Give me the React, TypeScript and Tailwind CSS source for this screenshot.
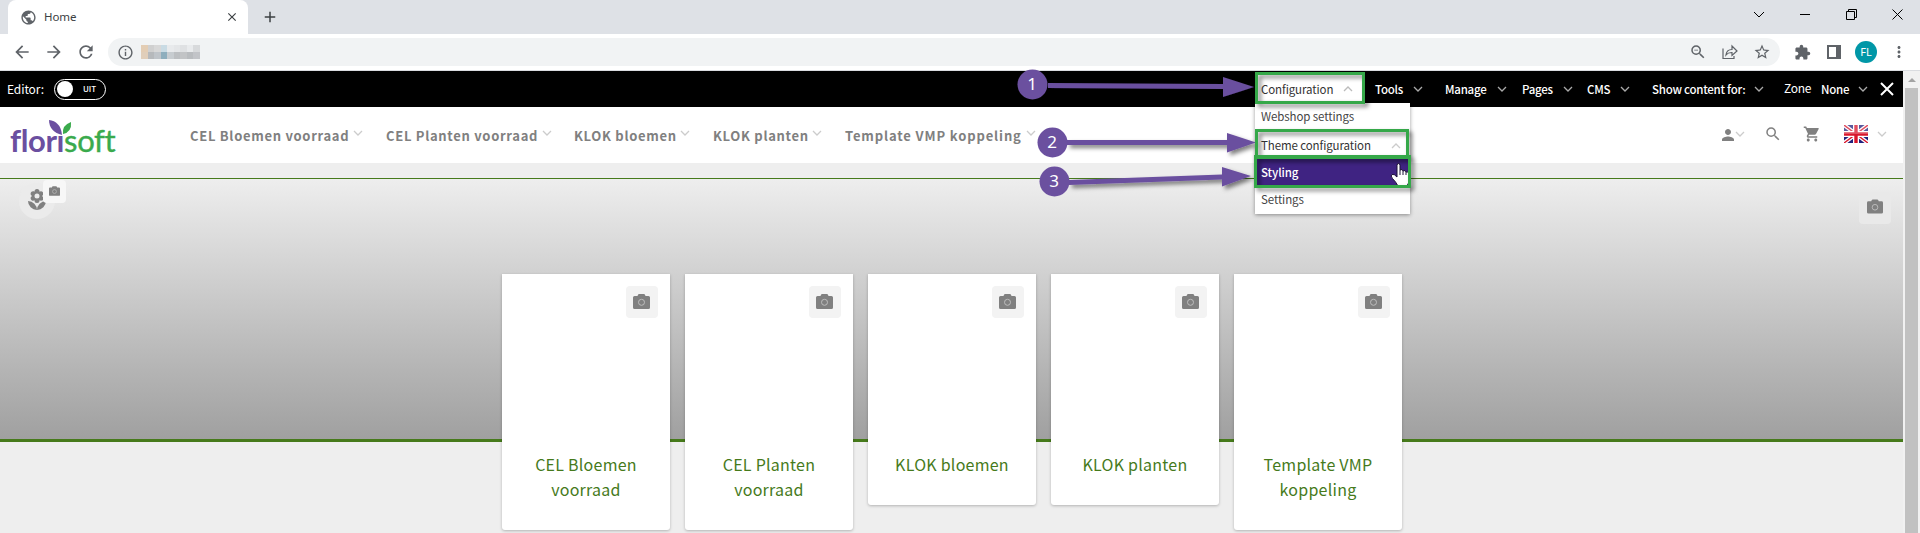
import React from "react";
import { MdPublic, MdLocalFlorist, MdPerson, MdSearch, MdShoppingCart, MdExtension, MdStarBorder, MdArrowBack, MdArrowForward, MdRefresh, MdInfoOutline, MdZoomOut, MdMoreVert, MdClose, MdAdd } from "react-icons/md";

type ChevronProps = { up?: boolean; className?: string };

function Chevron({ up, className = "" }: ChevronProps) {
  return (
    <svg viewBox="0 0 10 6" className={`h-[6px] w-[10px] shrink-0 ${className}`} fill="none" stroke="currentColor" strokeWidth="1.3">
      <path d={up ? "M1 5 L5 1 L9 5" : "M1 1 L5 5 L9 1"} />
    </svg>
  );
}

function Camera({ className = "" }: { className?: string }) {
  return (
    <svg viewBox="0 0 17 15" className={className}>
      <path fill="#808080" d="M1.5 2H4.5Q5 0 6 0H11Q12 0 12.5 2H15.5Q17 2 17 3.5V13.5Q17 15 15.5 15H1.5Q0 15 0 13.500V3.500Q0 2 1.500 2Z" />
      <circle cx="8.500" cy="8.300" r="3" fill="none" stroke="#bdbdbd" strokeWidth="1" />
    </svg>
  );
}

function TabStrip() {
  return (
    <div className="flex h-[34px] bg-[#dee1e6] pl-2">
      <div className="flex h-[34px] w-[240px] items-center rounded-t-lg bg-white pl-[12px] pr-[9px]">
        <MdPublic className="size-[17px] text-[#5f6368]" />
        <span className="ml-[7px] font-['Noto_Sans'] text-[11.5px] tracking-[-0.1px] text-[#3c4043]">Home</span>
        <MdClose className="ml-auto size-[14px] text-[#3c4043]" />
      </div>
      <MdAdd className="ml-[13px] mt-[8px] size-[18px] text-[#3c4043]" />
      <div className="ml-auto flex h-[28px] items-center pr-[17px] text-black">
        <svg className="mr-[35px] h-[7px] w-[12px]" viewBox="0 0 12 7" fill="none" stroke="currentColor"><path d="M1 1l5 5 5-5" /></svg>
        <div className="mr-[36px] h-px w-[10px] bg-black" />
        <svg className="mr-[35px] size-[11px]" viewBox="0 0 11 11" fill="none" stroke="currentColor"><path d="M.5 2.500h8v8h-8zM2.500 2.500v-2h8v8h-2" /></svg>
        <svg className="size-[11px]" viewBox="0 0 11 11" fill="none" stroke="currentColor"><path d="M.5.5l10 10M10.500.5l-10 10" /></svg>
      </div>
    </div>
  );
}

const blurRows = [
  ["#e3cdb4", "#d0d0d0", "#d8d8d8", "#c9dbe4", "#e8eaec", "#e4e6e8", "#dfe1e3", "#e9ebed", "#d8dadc"],
  ["#e0ceba", "#b6b9bc", "#bfc4c9", "#8eaebd", "#c7ccd0", "#bcbfc2", "#c2c4c6", "#b9bcbf", "#c2c4c8"],
];

function Toolbar() {
  return (
    <div className="flex h-[37px] items-center border-b border-[#dadce0] bg-white pl-[12px] text-[#5f6368]">
      <MdArrowBack className="size-[20px]" />
      <MdArrowForward className="ml-[12px] size-[20px]" />
      <MdRefresh className="ml-[12px] size-[20px]" />
      <div className="ml-[12px] flex h-[28px] w-[1672px] items-center rounded-full bg-[#f1f3f4] pl-[9px] pr-[9px]">
        <MdInfoOutline className="size-[17px]" />
        <div className="ml-[7px] grid">
          {blurRows.map((row, r) => (
            <div key={r} className="flex">
              {row.map((c, i) => <i key={i} className="h-[7px] w-[6.500px]" style={{ backgroundColor: c }} />)}
            </div>
          ))}
        </div>
        <MdZoomOut className="ml-auto size-[18px]" />
        <svg className="ml-[15px] size-[16px]" viewBox="0 0 16 16" fill="none" stroke="currentColor" strokeWidth="1.2">
          <path d="M1 4.500V14.500H12V12M4 11Q4.500 5.500 10 5.500V2L15 7L10 11.500V8.500Q6 8.300 4 11Z" />
        </svg>
        <MdStarBorder className="ml-[15px] size-[18px]" />
      </div>
      <MdExtension className="ml-[14px] size-[17px]" />
      <div className="ml-[16px] h-[14px] w-[14px] border-2 border-r-[5px] border-[#5f6368]" />
      <div className="ml-[14px] grid size-[22px] place-items-center rounded-full bg-[#0097a7] font-['Noto_Sans'] text-[11px] text-white">FL</div>
      <MdMoreVert className="ml-[13px] size-[18px]" />
    </div>
  );
}

const menus = [
  { label: "Tools", w: "w-[70px]", tw: "w-[38px]" },
  { label: "Manage", w: "w-[77px]", tw: "w-[52px]" },
  { label: "Pages", w: "w-[65px]", tw: "w-[41px]" },
  { label: "CMS", w: "w-[65px]", tw: "w-[33px]" },
  { label: "Show content for:", w: "w-[132px]", tw: "w-[102px]" },
];

function EditorBar() {
  return (
    <div className="flex h-[36px] items-center bg-black font-['Noto_Sans_CJK_SC',sans-serif] text-[11.5px] font-medium leading-[18px] tracking-[-0.25px] text-white">
      <span className="w-[54px] pl-[7px] text-[12px] font-normal tracking-[-0.1px]">Editor:</span>
      <div className="flex h-[21px] w-[52px] items-center rounded-full border border-white pl-[2px]">
        <div className="size-[16px] rounded-full bg-white" />
        <span className="ml-[10px] text-[8px] tracking-normal">UIT</span>
      </div>
      <div className="ml-[1149px] mr-[10px] flex h-[33px] w-[110px] items-center bg-white pl-[6px] font-normal tracking-[-0.1px] text-[#333]">
        <span className="w-[82px]">Configuration</span>
        <Chevron up className="text-[#bbb]" />
      </div>
      {menus.map((m) => (
        <div key={m.label} className={`flex shrink-0 items-center whitespace-nowrap ${m.w}`}>
          <span className={m.tw}>{m.label}</span>
          <Chevron className="text-[#aaa]" />
        </div>
      ))}
      <span className="w-[37px] pb-[2px] text-[12px] font-normal">Zone</span>
      <span className="w-[37px]">None</span>
      <Chevron className="text-[#aaa]" />
      <svg className="ml-[12px] size-[14px]" viewBox="0 0 14 14" stroke="white" strokeWidth="2"><path d="M1 1l12 12M13 1L1 13" /></svg>
    </div>
  );
}

function Logo() {
  return (
    <div className="relative w-[110px] whitespace-nowrap pt-[10px] font-['Lato'] text-[31px] leading-none tracking-[-0.4px]">
      <span className="font-bold text-[#6b4fa0]">florı</span>
      <span className="text-[#3aaa4c] [-webkit-text-stroke:0.4px_#3aaa4c]">soft</span>
      <svg className="absolute left-[39px] top-[5px] h-[16px] w-[24px]" viewBox="0 0 24 16">
        <path fill="#6b4fa0" d="M0 0C7 1 12 5 13 15C5 13 0 8 0 0Z" />
        <path fill="#3aaa4c" d="M22 2Q23 12 14 14Q13 5 22 2Z" />
      </svg>
    </div>
  );
}

const nav = [
  { label: "CEL Bloemen voorraad", w: "w-[196px]", tw: "w-[163px]" },
  { label: "CEL Planten voorraad", w: "w-[188px]", tw: "w-[156px]" },
  { label: "KLOK bloemen", w: "w-[139px]", tw: "w-[106px]" },
  { label: "KLOK planten", w: "w-[132px]", tw: "w-[99px]" },
  { label: "Template VMP koppeling", w: "w-[200px] tracking-[0.87px]", tw: "w-[181px]" },
];

function Flag() {
  return (
    <svg viewBox="0 0 24 18" className="h-[18px] w-[24px]">
      <path fill="#20207c" d="M0 0h24v18H0z" />
      <path stroke="white" strokeWidth="4" d="M0 0l24 18M24 0L0 18" />
      <path stroke="#d8152b" strokeWidth="1.400" d="M0 0l24 18M24 0L0 18" />
      <path stroke="white" strokeWidth="6" d="M12 0v18M0 9h24" />
      <path stroke="#d8152b" strokeWidth="3.400" d="M12 0v18M0 9h24" />
      <path fill="white" fillOpacity="0.25" d="M0 0h24v9H0z" />
    </svg>
  );
}

function Header() {
  return (
    <header className="flex h-[56px] items-center bg-white pl-[10px] text-[#808080]">
      <Logo />
      <nav className="ml-[70px] flex font-['Noto_Sans_CJK_SC',sans-serif] text-[13px] font-bold tracking-[0.7px]">
        {nav.map((n) => (
          <div key={n.label} className={`flex items-center whitespace-nowrap ${n.w}`}>
            <span className={`pt-[2px] ${n.tw}`}>{n.label}</span>
            <Chevron className="mb-[5px] text-[#ccc]" />
          </div>
        ))}
      </nav>
      <div className="ml-auto flex items-center pb-[3px] pr-[16px]">
        <MdPerson className="mt-[2px] size-[18px]" />
        <Chevron className="-ml-[2px] text-[#ccc]" />
        <MdSearch className="ml-[19px] size-[18px]" />
        <MdShoppingCart className="ml-[21px] size-[18px]" />
        <div className="ml-[23px]"><Flag /></div>
        <Chevron className="ml-[9px] text-[#ccc]" />
      </div>
    </header>
  );
}

const cards = ["CEL Bloemen voorraad", "CEL Planten voorraad", "KLOK bloemen", "KLOK planten", "Template VMP koppeling"];

function Card({ title }: { title: string }) {
  return (
    <article className="w-[168px] rounded-b-[3px] bg-white shadow-[0_1px_3px_rgba(0,0,0,0.25)]">
      <div className="flex h-[168px] justify-end pr-[12px] pt-[12px]">
        <div className="grid size-[32px] place-items-center rounded-[4px] bg-[#f3f3f3] pb-[2px] pr-[2px]"><Camera className="h-[15px] w-[17px]" /></div>
      </div>
      <h3 className="px-[20px] pb-[28.5px] pt-[10px] text-center font-['Noto_Sans_CJK_SC',sans-serif] text-[16px] leading-[24.5px] tracking-[0.25px] text-[#467a1b]">{title}</h3>
    </article>
  );
}

function Annotations() {
  return (
    <svg className="pointer-events-none absolute left-0 top-0 h-[533px] w-[1903px]" viewBox="0 0 1903 533">
      <defs><filter id="sh" x="-20%" y="-40%" width="150%" height="200%"><feDropShadow dx="3" dy="3" stdDeviation="2" floodColor="#000" floodOpacity="0.5" /></filter></defs>
      <g fill="#6b509f" filter="url(#sh)">
        <path d="M1048 83L1223 84V77L1254 87L1223 97V89L1048 88Z" />
        <path d="M1067 140H1227V133L1256 142.500L1227 152.500V145H1067Z" />
        <path d="M1069 180L1222 174.500V167L1251 176L1222 186.500V179.500L1069 185Z" />
      </g>
      <g fill="#6b509f"><circle cx="1032.500" cy="84.500" r="15" /><circle cx="1052.500" cy="142.500" r="15" /><circle cx="1054.500" cy="181.500" r="15" /></g>
      <g fill="white" fontFamily="Noto Sans" fontSize="17" textAnchor="middle"><text x="1032" y="90">1</text><text x="1052" y="148">2</text><text x="1054" y="187">3</text></g>
      <path
        fill="white" stroke="#1c1236" strokeWidth="1"
        d="M1397 165.500Q1397 163.500 1398.500 163.500T1400 165.500V170Q1402.500 168.500 1403 171Q1405.500 169.500 1406 172Q1409 171 1409 174V180Q1409 183 1407 186H1398Q1396 182 1392.500 178.500Q1390 175.500 1392 174.500T1397 177Z"
      />
      <path stroke="#1c1236" d="M1400 170v5M1403 171v4M1406 172v3" />
      <g fill="none" stroke="#36a849" strokeWidth="3" filter="url(#sh)">
        <rect x="1256.500" y="73.500" width="107" height="29" />
        <rect x="1256.500" y="130.500" width="151" height="27" />
        <rect x="1255.500" y="156.500" width="154" height="30" />
      </g>
    </svg>
  );
}

function Dropdown() {
  return (
    <div className="absolute left-[1255px] top-[103px] w-[155px] bg-white font-['Noto_Sans_CJK_SC',sans-serif] text-[11.5px] tracking-[-0.1px] text-[#444] shadow-[0_1px_4px_rgba(0,0,0,0.4)]">
      <div className="flex h-[28px] items-center pl-[6px]">Webshop settings</div>
      <div className="flex h-[28px] items-center justify-between pl-[6px] pr-[9px] pt-[2px] text-[#333]">Theme configuration<Chevron up className="text-[#ccc]" /></div>
      <div className="flex h-[27px] items-center bg-[#3f2382] pl-[6px] font-medium text-white">Styling</div>
      <div className="flex h-[28px] items-center pl-[6px]">Settings</div>
    </div>
  );
}

export default function App() {
  return (
    <div className="relative h-[533px] w-[1920px] overflow-hidden bg-[#eee]">
      <TabStrip />
      <Toolbar />
      <div className="flex h-[462px]">
        <main className="w-[1903px]">
          <EditorBar />
          <Header />
          <section className="mt-[15px] h-[264px] border-b-[3px] border-t border-b-[#467a1b] border-t-[#467a1b] bg-linear-to-b from-[#eee] to-[#a0a0a0]">
            <div className="flex h-[95px] justify-between pl-[19px] pr-[12px]">
              <div className="relative mt-[4px] h-[36px] w-[50px]">
                <div className="grid size-[36px] place-items-center rounded-full bg-[#ebebeb] pb-[3px]"><MdLocalFlorist className="size-[24px] text-[#808080]" /></div>
                <div className="absolute left-[24px] top-[-3px] grid size-[23px] place-items-center rounded-[4px] bg-[#f7f7f7] pb-[2px] pr-px"><Camera className="h-[10px] w-[11px]" /></div>
              </div>
              <div className="mt-[13px] grid size-[32px] place-items-center rounded-[4px] bg-[#e9e9e9] pb-[3px]"><Camera className="h-[15px] w-[16px]" /></div>
            </div>
            <div className="flex items-start gap-[15px] pl-[502px]">{cards.map((c) => <Card key={c} title={c} />)}</div>
          </section>
        </main>
        <aside className="w-[17px] bg-[#f1f1f1] px-[2px]">
          <div className="grid h-[17px] place-items-center"><div className="border-x-4 border-b-4 border-x-transparent border-b-[#a3a3a3]" /></div>
          <div className="h-[445px] bg-[#c1c1c1]" />
        </aside>
      </div>
      <Dropdown />
      <Annotations />
    </div>
  );
}
